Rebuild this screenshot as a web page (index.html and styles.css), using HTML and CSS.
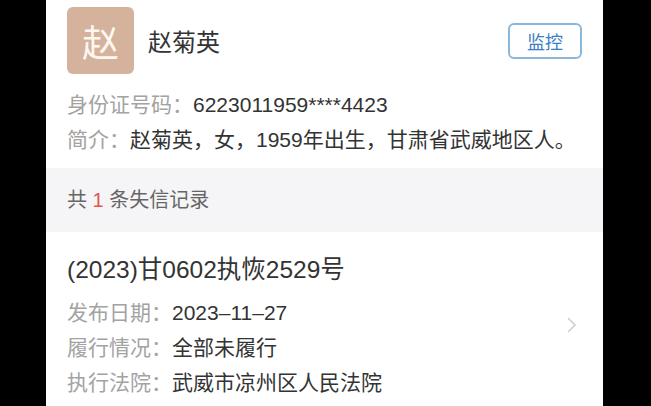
FILE: index.html
```html
<!DOCTYPE html>
<html lang="zh">
<head>
  <meta charset="UTF-8" />
  <title>失信记录</title>
  <link rel="stylesheet" href="styles.css">
</head>
<body>
  <div class="screen">
    <!-- 个人信息 -->
    <section class="profile">
      <div class="head">
        <div class="avatar">赵</div>
        <div class="name">赵菊英</div>
        <button class="watch">监控</button>
      </div>
      <p class="row"><span class="label">身份证号码：</span><span class="value">6223011959****4423</span></p>
      <p class="row"><span class="label">简介：</span><span class="value">赵菊英，女，1959年出生，甘肃省武威地区人。</span></p>
    </section>

    <!-- 记录数 -->
    <div class="count">共 <em>1</em> 条失信记录</div>

    <!-- 失信记录 -->
    <section class="record">
      <div class="record-body">
        <div class="case-no">(2023)甘0602执恢2529号</div>
        <p class="row"><span class="label">发布日期：</span><span class="value">2023–11–27</span></p>
        <p class="row"><span class="label">履行情况：</span><span class="value">全部未履行</span></p>
        <p class="row"><span class="label">执行法院：</span><span class="value">武威市凉州区人民法院</span></p>
      </div>
      <svg class="arrow" width="12" height="18" viewBox="0 0 12 18">
        <polyline points="2,2 9,9 2,16" fill="none" stroke="#cfcfcf" stroke-width="1.6" />
      </svg>
    </section>
  </div>
</body>
</html>
```

FILE: styles.css
```css
/* 公用样式 */
* {
  box-sizing: border-box;
  margin: 0;
  padding: 0;
}
body {
  background: #000;
  font-family: "Liberation Sans", "Noto Sans CJK SC", sans-serif;
  color: #333;
  height: 406px;
  overflow: hidden;
}

.screen {
  width: 557px;
  margin-left: 46px;
  height: 406px;
  background: #fff;
  display: flex;
  flex-direction: column;
}

/* 个人信息 */
.profile {
  padding: 7px 21px 11px 21px;
}
.head {
  display: flex;
  align-items: center;
  margin-bottom: 13px;
}
.avatar {
  width: 67px;
  height: 67px;
  border-radius: 6px;
  background: #d5b29c;
  color: #fdf7f2;
  font-size: 37px;
  display: flex;
  align-items: center;
  justify-content: center;
}
.name {
  flex: 1;
  margin-left: 14px;
  font-size: 24px;
  color: #333;
}
.watch {
  width: 74px;
  height: 36px;
  border: 2px solid #8ab8da;
  border-radius: 6px;
  background: #fff;
  color: #3a7fc1;
  font-family: "Noto Sans CJK SC", sans-serif;
  font-size: 18px;
}

.row {
  display: flex;
  font-size: 21px;
  line-height: 35px;
  white-space: nowrap;
}
.label {
  color: #a3a3a3;
}
.value {
  color: #333;
}

/* 记录数 */
.count {
  height: 64px;
  line-height: 64px;
  padding-left: 21px;
  background: #f5f5f7;
  font-size: 20px;
  color: #666;
}
.count em {
  font-style: normal;
  color: #e0574f;
}

/* 失信记录 */
.record {
  flex: 1;
  display: flex;
  align-items: center;
  padding: 0 25px 0 21px;
}
.record-body {
  flex: 1;
  padding-top: 21px;
  align-self: flex-start;
}
.case-no {
  font-size: 24.5px;
  line-height: 34px;
  margin-bottom: 8px;
}
.arrow {
  margin-top: 12px;
}
```
